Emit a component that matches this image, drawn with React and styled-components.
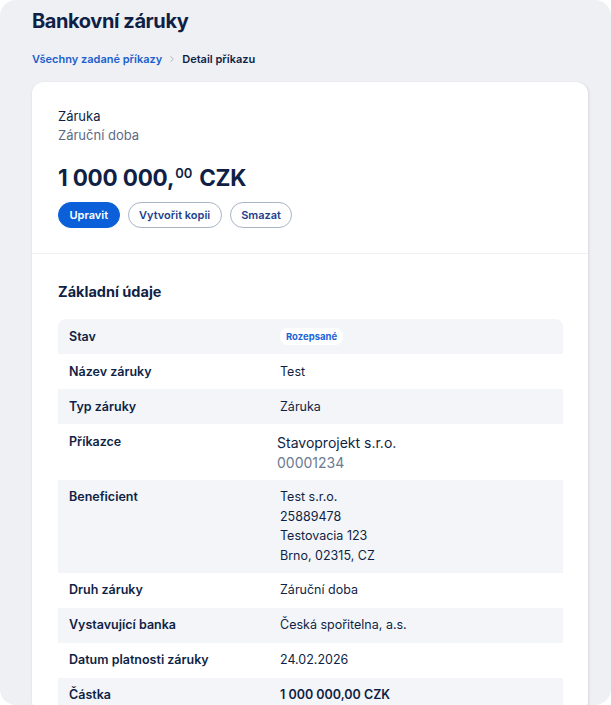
import styled, { createGlobalStyle } from "styled-components";
import { ChevronRight } from "lucide-react";

const GlobalStyle = createGlobalStyle`
  body {
    margin: 0;
    background: #ffffff;
    font-family: Inter, "Noto Sans", sans-serif;
    -webkit-font-smoothing: antialiased;
  }
`;

const rows = [
  { label: "Stav", badge: "Rozepsané" },
  { label: "Název záruky", values: ["Test"] },
  { label: "Typ záruky", values: ["Záruka"] },
  { label: "Příkazce", party: ["Stavoprojekt s.r.o.", "00001234"] },
  { label: "Beneficient", values: ["Test s.r.o.", "25889478", "Testovacia 123", "Brno, 02315, CZ"] },
  { label: "Druh záruky", values: ["Záruční doba"] },
  { label: "Vystavující banka", values: ["Česká spořitelna, a.s."] },
  { label: "Datum platnosti záruky", values: ["24.02.2026"] },
  { label: "Částka", values: ["1 000 000,00 CZK"], strong: true },
];

function App() {
  return (
    <>
      <GlobalStyle />
      <Frame>
        <Title>Bankovní záruky</Title>
        <Breadcrumbs>
          <Crumb href="#">Všechny zadané příkazy</Crumb>
          <ChevronRight size={10} strokeWidth={2} color="#a3abba" />
          <Current>Detail příkazu</Current>
        </Breadcrumbs>
        <Card>
          <Summary>
            <Kind>Záruka</Kind>
            <SubKind>Záruční doba</SubKind>
            <Amount>
              1 000 000,<Cents>00</Cents> CZK
            </Amount>
            <Actions>
              <Button primary>Upravit</Button>
              <Button>Vytvořit kopii</Button>
              <Button>Smazat</Button>
            </Actions>
          </Summary>
          <Section>
            <SectionTitle>Základní údaje</SectionTitle>
            <Table>
              {rows.map((row, index) => (
                <Row key={row.label} striped={index % 2 === 0}>
                  <Label>{row.label}</Label>
                  <Values>
                    {row.badge && <Badge>{row.badge}</Badge>}
                    {row.party && (
                      <>
                        <PartyName>{row.party[0]}</PartyName>
                        <PartyId>{row.party[1]}</PartyId>
                      </>
                    )}
                    {row.values &&
                      row.values.map((v) => (
                        <Value key={v} strong={row.strong}>
                          {v}
                        </Value>
                      ))}
                  </Values>
                </Row>
              ))}
            </Table>
          </Section>
        </Card>
      </Frame>
    </>
  );
}

const Frame = styled.div`
  height: 705px;
  box-sizing: border-box;
  overflow: hidden;
  border-radius: 16px;
  background: #eef0f4;
  padding: 7px 23px 0 32px;
  color: #0f1f45;
`;

const Title = styled.h1`
  margin: 0;
  font-size: 20px;
  line-height: 28px;
  font-weight: 700;
  color: #0f1f45;
  letter-spacing: -0.4px;
`;

const Breadcrumbs = styled.nav`
  display: flex;
  align-items: center;
  gap: 5px;
  margin-top: 15px;
  height: 18px;
  font-size: 11px;
  font-weight: 600;
`;

const Crumb = styled.a`
  color: #1c5fcc;
  text-decoration: none;
`;

const Current = styled.span`
  color: #0f1f45;
`;

const Card = styled.section`
  margin-top: 14px;
  background: #ffffff;
  border-radius: 12px;
  box-shadow: 0 1px 3px rgba(16, 24, 40, 0.08), 2px 0 2px rgba(16, 24, 40, 0.04);
`;

const Summary = styled.div`
  padding: 25px 26px 25px;
  border-bottom: 1px solid #eef0f3;
`;

const Kind = styled.div`
  font-size: 13px;
  line-height: 19px;
  color: #0f1f45;
`;

const SubKind = styled.div`
  font-size: 13px;
  line-height: 19px;
  color: #5b6b86;
`;

const Amount = styled.div`
  margin-top: 17px;
  font-size: 22.5px;
  line-height: 32px;
  font-weight: 700;
  color: #0f1f45;
  letter-spacing: -0.2px;
`;

const Cents = styled.span`
  font-size: 13px;
  font-weight: 600;
  vertical-align: 8px;
  line-height: 0;
  margin: 0 2px 0 1px;
`;

const Actions = styled.div`
  display: flex;
  gap: 8px;
  margin-top: 8px;
`;

const Button = styled.button`
  height: 26px;
  box-sizing: border-box;
  padding: 0 10.5px;
  border-radius: 13px;
  font-family: inherit;
  font-size: 11px;
  font-weight: 600;
  cursor: pointer;
  background: ${({ primary }) => (primary ? "#0b5fd9" : "#ffffff")};
  color: ${({ primary }) => (primary ? "#ffffff" : "#1d3f8c")};
  border: 1px solid ${({ primary }) => (primary ? "#0b5fd9" : "#a9b4c4")};
`;

const Section = styled.div`
  padding: 28px 25px 0 26px;
`;

const SectionTitle = styled.h2`
  margin: 0 0 17px;
  font-size: 14.5px;
  line-height: 20px;
  font-weight: 700;
  color: #0f1f45;
`;

const Table = styled.div`
  border-radius: 8px 8px 0 0;
  overflow: hidden;
`;

const Row = styled.div`
  display: grid;
  grid-template-columns: 211px 1fr;
  padding: 7.5px 11px;
  min-height: 35px;
  box-sizing: border-box;
  background: ${({ striped }) => (striped ? "#f3f5f8" : "#ffffff")};
`;

const Label = styled.div`
  font-size: 12.5px;
  line-height: 20px;
  font-weight: 600;
  color: #0f1f45;
`;

const Values = styled.div`
  display: flex;
  flex-direction: column;
  align-items: flex-start;
`;

const Value = styled.div`
  font-size: 12.5px;
  line-height: 19.5px;
  font-weight: ${({ strong }) => (strong ? 600 : 400)};
  color: #0f1f45;
`;

const PartyName = styled.div`
  margin-left: -3px;
  margin-top: 1.5px;
  font-size: 14px;
  line-height: 19.5px;
  color: #0f1f45;
`;

const PartyId = styled(PartyName)`
  margin-top: 0;
  color: #6b7a92;
`;

const Badge = styled.span`
  margin-top: 1.5px;
  padding: 2px 6px;
  border-radius: 8px;
  background: #ffffff;
  color: #1b63d6;
  font-size: 9.5px;
  line-height: 13px;
  font-weight: 700;
`;

export default App;
